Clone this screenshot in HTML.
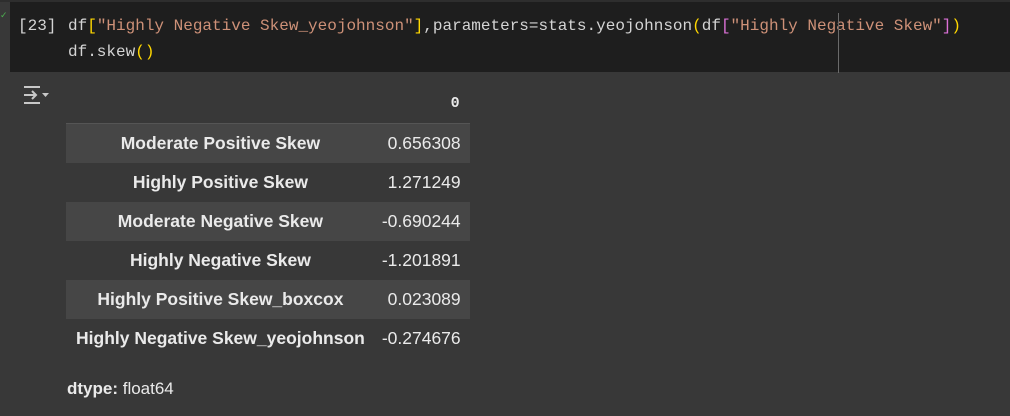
<!DOCTYPE html>
<html><head><style>
body{margin:0;width:1010px;height:416px;background:#383838;overflow:hidden;position:relative;font-family:"Liberation Sans",sans-serif;}
.cell{position:absolute;left:10px;top:2px;width:1000px;height:70px;background:#1e1e1e;}
.top{position:absolute;left:0;top:0;width:1010px;height:2px;background:#2e2e2e;}
.code{position:absolute;left:68px;top:13px;font-family:"Liberation Mono",monospace;font-size:16px;line-height:26px;color:#d4d4d4;white-space:pre;}
.s{color:#ce9178}.y{color:#ffd700}.p{color:#da70d6}
.num{position:absolute;left:18px;top:13px;font-family:"Liberation Mono",monospace;font-size:16px;line-height:26px;color:#d4d4d4;}
.cursor{position:absolute;left:838px;top:13px;width:1px;height:60px;background:#6a6a6a;}
table{position:absolute;left:66px;top:84px;border-collapse:collapse;color:#eaeaea;font-size:17.5px;}
th.h{height:39px;text-align:right;padding:0 10px;font-family:"Liberation Mono",monospace;font-size:15px;}
tbody tr{height:39px;}
tbody tr:nth-child(odd){background:#464646;}
tbody tr:first-child{border-top:1px solid #555;}
td.l{font-weight:bold;text-align:center;padding:0 10px;}
td.v{text-align:right;padding:0 9px 0 7px;}
.dt{position:absolute;left:67px;top:379px;color:#eaeaea;font-size:17px;}
</style></head><body>
<div class="top"></div>
<div class="cell"></div>
<div style="position:absolute;left:0;top:10px;width:4px;height:4px;color:#4caf50;font-size:9px;">✓</div>
<div class="num">[23]</div>
<div class="code">df<span class="y">[</span><span class="s">"Highly Negative Skew_yeojohnson"</span><span class="y">]</span>,parameters=stats.yeojohnson<span class="y">(</span>df<span class="p">[</span><span class="s">"Highly Negative Skew"</span><span class="p">]</span><span class="y">)</span>
df.skew<span class="y">()</span></div>
<div class="cursor"></div>
<svg style="position:absolute;left:22px;top:84px" width="28" height="22" viewBox="0 0 28 22" fill="none" stroke="#c8c8c8" stroke-width="2"><path d="M2 3h16M2 19h16M2 11h12M10 7l4 4-4 4"/><path d="M20 9h7l-3.5 4z" fill="#c8c8c8" stroke="none"/></svg>
<table>
<thead><tr><th></th><th class="h">0</th></tr></thead>
<tbody>
<tr><td class="l">Moderate Positive Skew</td><td class="v">0.656308</td></tr>
<tr><td class="l">Highly Positive Skew</td><td class="v">1.271249</td></tr>
<tr><td class="l">Moderate Negative Skew</td><td class="v">-0.690244</td></tr>
<tr><td class="l">Highly Negative Skew</td><td class="v">-1.201891</td></tr>
<tr><td class="l">Highly Positive Skew_boxcox</td><td class="v">0.023089</td></tr>
<tr><td class="l">Highly Negative Skew_yeojohnson</td><td class="v">-0.274676</td></tr>
</tbody></table>
<div class="dt"><b>dtype:</b> float64</div>
</body></html>
